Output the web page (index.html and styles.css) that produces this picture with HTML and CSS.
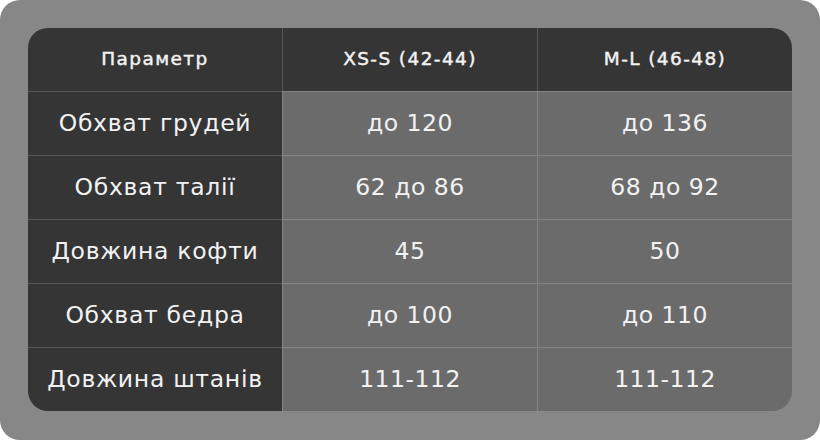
FILE: index.html
```html
<!DOCTYPE html>
<html lang="uk">
<head>
<meta charset="utf-8">
<link rel="stylesheet" href="styles.css">
</head>
<body>
<div class="frame">
  <div class="sheet">
    <div class="cell head first">Параметр</div>
    <div class="cell head">XS-S (42-44)</div>
    <div class="cell head">M-L (46-48)</div>

    <div class="cell label first">Обхват грудей</div>
    <div class="cell val">до 120</div>
    <div class="cell val">до 136</div>

    <div class="cell label first">Обхват талії</div>
    <div class="cell val">62 до 86</div>
    <div class="cell val">68 до 92</div>

    <div class="cell label first">Довжина кофти</div>
    <div class="cell val">45</div>
    <div class="cell val">50</div>

    <div class="cell label first">Обхват бедра</div>
    <div class="cell val">до 100</div>
    <div class="cell val">до 110</div>

    <div class="cell label first">Довжина штанів</div>
    <div class="cell val">111-112</div>
    <div class="cell val">111-112</div>
  </div>
</div>
</body>
</html>
```

FILE: styles.css
```css
html, body {
  margin: 0;
  padding: 0;
  background: #ffffff;
}
body {
  font-family: "DejaVu Sans", "Noto Sans", sans-serif;
}
.frame {
  width: 820px;
  height: 440px;
  box-sizing: border-box;
  padding: 28px;
  background: #878787;
  border-radius: 20px;
}
.sheet {
  display: grid;
  grid-template-columns: 254px 255px 255px;
  grid-template-rows: 63px repeat(5, 64px);
  border-radius: 20px;
  overflow: hidden;
}
.cell {
  display: flex;
  align-items: center;
  justify-content: center;
  color: #f2f2f2;
  border-left: 1px solid rgba(255,255,255,0.17);
  border-top: 1px solid rgba(255,255,255,0.17);
  box-sizing: border-box;
  padding-bottom: 2px;
}
.cell.first { border-left: none; }
.cell.head {
  border-top: none;
  background: #353535;
  font-size: 18.5px;
  -webkit-text-stroke: 0.45px #f2f2f2;
  letter-spacing: 1.4px;
}
.cell.label { background: #353535; font-size: 23.5px; letter-spacing: 0.7px; }
.cell.val { background: #6b6b6b; font-size: 23.5px; letter-spacing: 0.5px; }
```
